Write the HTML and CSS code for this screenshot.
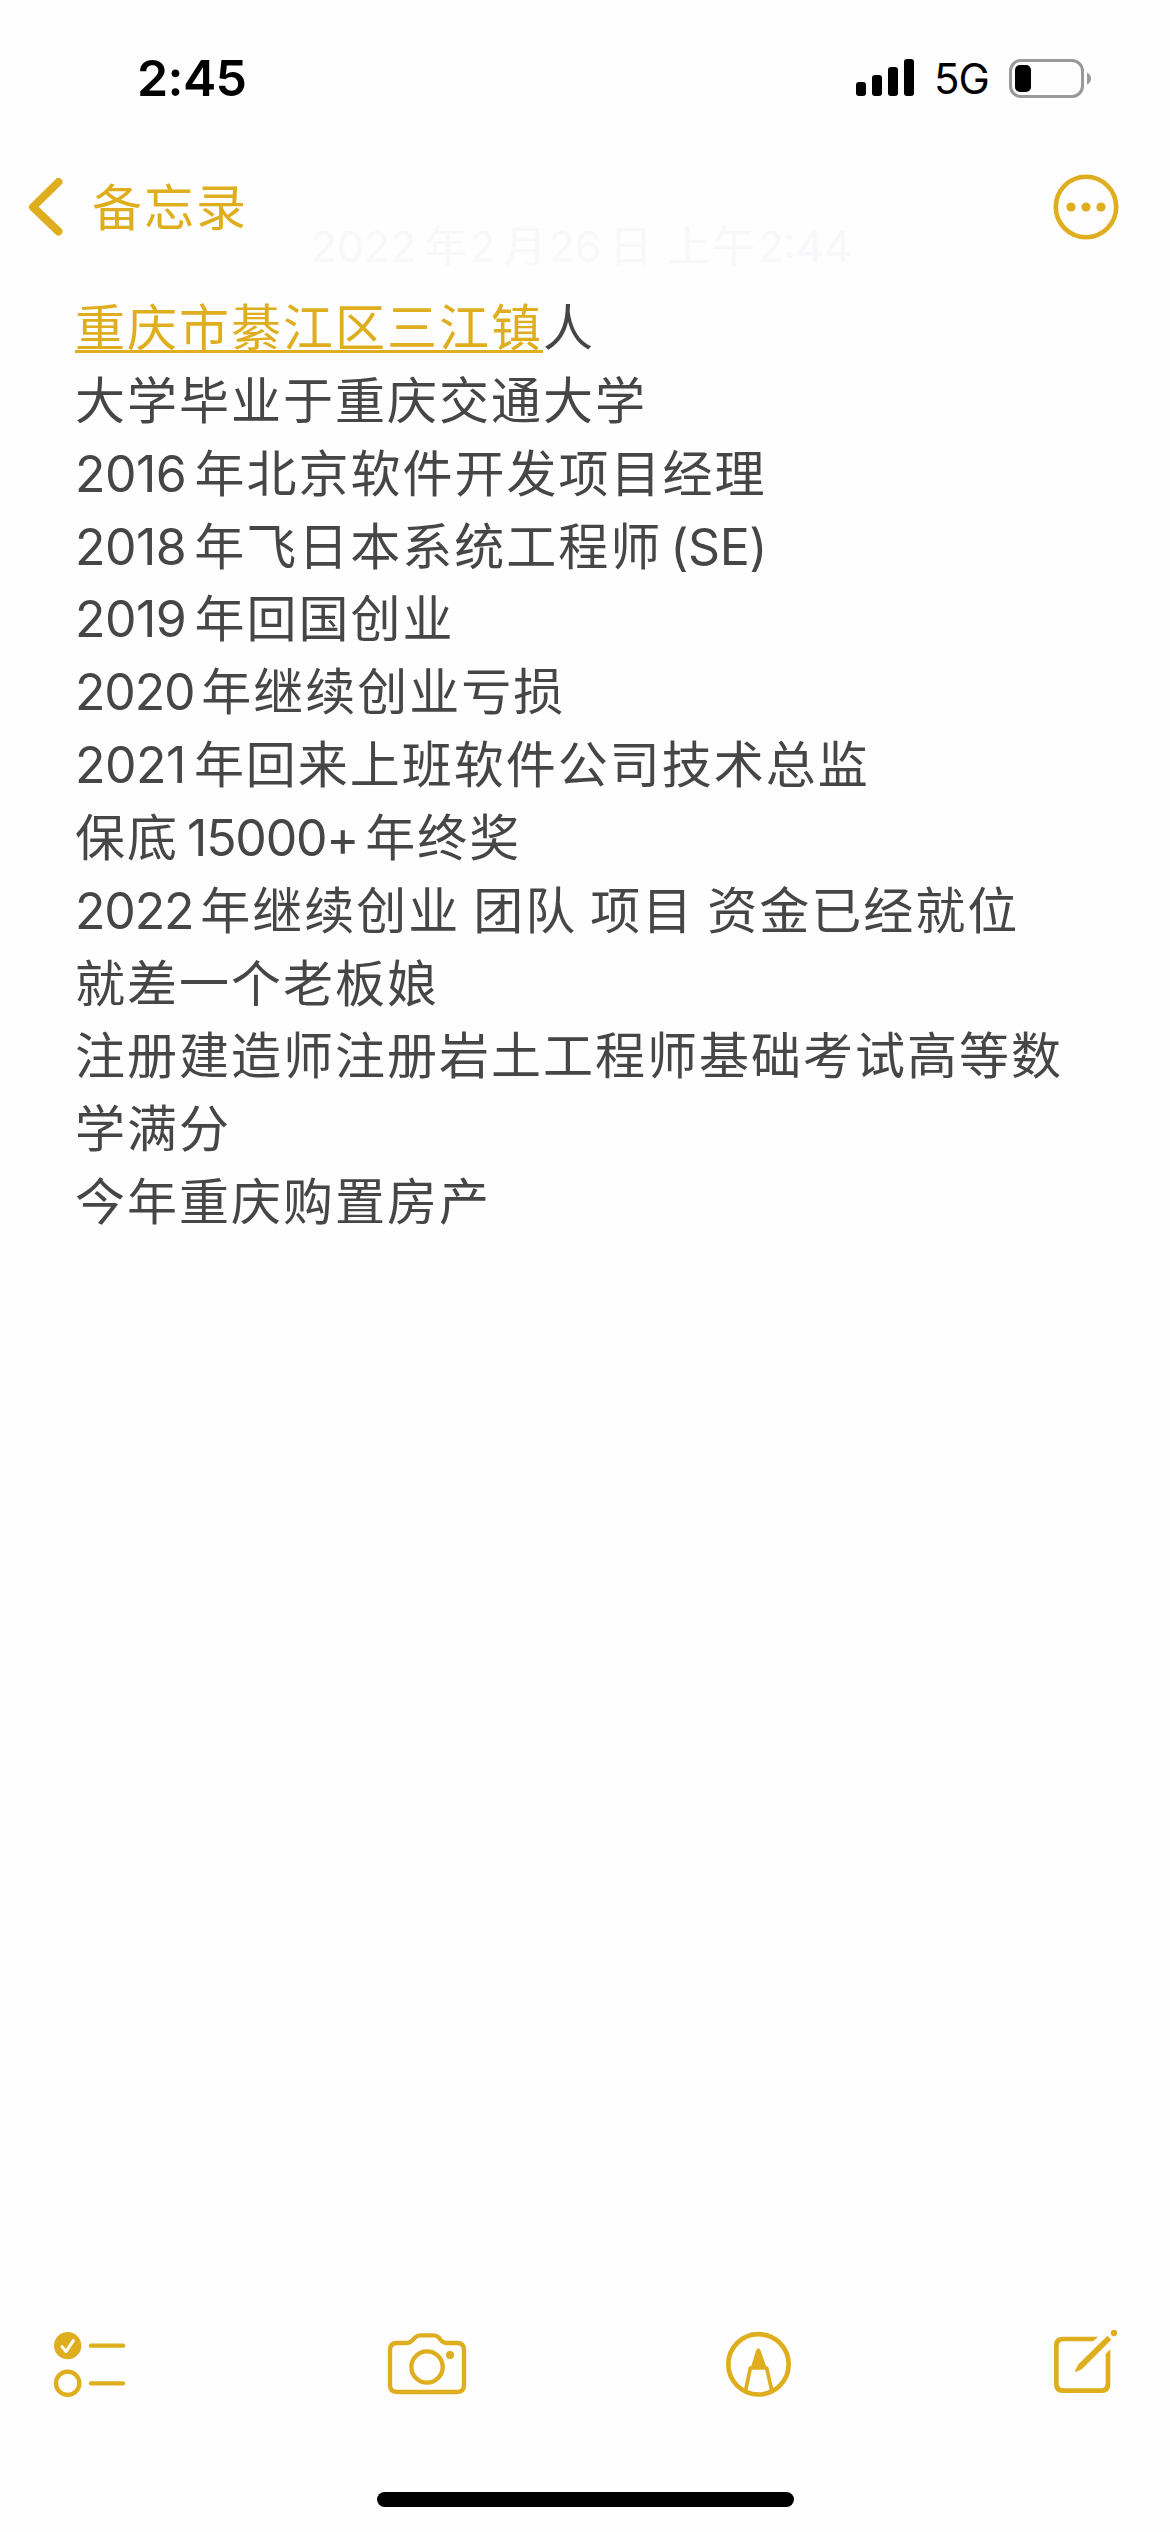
FILE: index.html
```html
<!DOCTYPE html>
<html lang="zh-CN">
  <head>
    <meta charset="UTF-8" />
    <meta name="viewport" content="width=device-width, initial-scale=1.0" />
    <title>备忘录</title>
    <link rel="stylesheet" href="styles.css">
  </head>
  <body>
    <div class="screen">
      <header class="status-bar">
        <span class="clock">2:45</span>
        <div class="status-right">
          <svg class="signal" width="58" height="38" viewBox="0 0 58 38" fill="#000">
            <rect x="0" y="23" width="10" height="14" rx="3"></rect>
            <rect x="16" y="16" width="10" height="21" rx="3"></rect>
            <rect x="32" y="8" width="10" height="29" rx="3"></rect>
            <rect x="48" y="0" width="10" height="37" rx="3"></rect>
          </svg>
          <span class="network">5G</span>
          <svg width="83" height="39" viewBox="0 0 83 39">
            <rect x="1.5" y="1.5" width="72" height="36" rx="10.5" fill="none" stroke="#999" stroke-width="3"></rect>
            <rect x="6" y="6" width="16" height="27" rx="5" fill="#000"></rect>
            <path d="M78 13.500q4 2 4 6t-4 6z" fill="#999"></path>
          </svg>
        </div>
      </header>

      <nav class="nav-bar">
        <a class="back">
          <svg width="36" height="60" viewBox="0 0 36 60" fill="none" stroke="currentColor" stroke-width="8" stroke-linecap="round" stroke-linejoin="round">
            <polyline points="30.500 5 5 30 30.500 54.500"></polyline>
          </svg>
          <span>备忘录</span>
        </a>
        <svg class="more" width="66" height="66" viewBox="0 0 66 66" fill="currentColor">
          <circle cx="33" cy="33" r="30.200" fill="none" stroke="currentColor" stroke-width="4.600"></circle>
          <circle cx="18" cy="33" r="4.600"></circle>
          <circle cx="33" cy="33" r="4.600"></circle>
          <circle cx="48" cy="33" r="4.600"></circle>
        </svg>
      </nav>

      <div class="date"><span class="num">2022</span>年<span class="num">2</span>月<span class="num">26</span>日<span class="gap"></span>上午<span class="num">2:44</span></div>

      <main class="note">
        <p><a class="link">重庆市綦江区三江镇</a>人</p>
        <p>大学毕业于重庆交通大学</p>
        <p><span class="num">2016</span>年北京软件开发项目经理</p>
        <p><span class="num">2018</span>年飞日本系统工程师<span class="num lead">(SE)</span></p>
        <p><span class="num">2019</span>年回国创业</p>
        <p><span class="num tight">2020</span>年继续创业亏损</p>
        <p><span class="num">2021</span>年回来上班软件公司技术总监</p>
        <p>保底<span class="num tight lead">15000+</span>年终奖</p>
        <p><span class="num tight">2022</span>年继续创业<span class="gap"></span>团队<span class="gap"></span>项目<span class="gap"></span>资金已经就位</p>
        <p>就差一个老板娘</p>
        <p>注册建造师注册岩土工程师基础考试高等数</p>
        <p>学满分</p>
        <p>今年重庆购置房产</p>
      </main>

      <footer class="toolbar">
        <svg width="130" height="110" viewBox="0 0 390 330" fill="none" stroke="currentColor" stroke-width="13" stroke-linecap="round" stroke-linejoin="round">
          <circle cx="113" cy="107" r="41" fill="currentColor" stroke="none"></circle>
          <polyline points="96 110 108 125 130 92" stroke="#fff" stroke-width="9"></polyline>
          <circle cx="113" cy="220" r="35"></circle>
          <line x1="183" y1="107" x2="279" y2="107"></line>
          <line x1="183" y1="220" x2="279" y2="220"></line>
        </svg>
        <svg width="130" height="110" viewBox="0 0 390 330" fill="none" stroke="currentColor" stroke-width="13" stroke-linejoin="round">
          <path d="M111 99H140Q149 99 155 93L166 82Q172 76 181 76H221Q230 76 236 82L245 93Q251 99 260 99H291Q312 99 312 120V225Q312 246 291 246H111Q90 246 90 225V120Q90 99 111 99Z"></path>
          <circle cx="201" cy="171" r="47"></circle>
          <circle cx="270" cy="135" r="12" fill="currentColor" stroke="none"></circle>
        </svg>
        <svg width="130" height="110" viewBox="0 0 390 330" fill="none" stroke="currentColor" stroke-width="13" stroke-linejoin="round">
          <circle cx="175.500" cy="163" r="90.500" stroke-width="14"></circle>
          <path d="M153 171L168 122Q175 108 182 122L199 171Z" fill="currentColor" stroke="none"></path>
          <path d="M137 240L151 174H200L215 240" stroke-width="11"></path>
        </svg>
        <svg width="130" height="110" viewBox="0 0 390 330" fill="currentColor">
          <path d="M204 80L190 94H101Q86 94 86 109V220Q86 235 101 235H212Q227 235 227 220V132L241 118V223Q241 249 215 249H98Q72 249 72 223V106Q72 80 98 80Z"></path>
          <path d="M232 77L244 89L157 176L138 186Q134 186 136 181L144 164Z"></path>
          <circle cx="252" cy="69" r="9.500"></circle>
        </svg>
      </footer>
      <div class="home-indicator"></div>
    </div>
  </body>
</html>
```

FILE: styles.css
```css
:root {
  --accent: #dfae1f;
  --ink: #464646;
}
* {
  box-sizing: border-box;
}
body {
  margin: 0;
  background: #fefefe;
  color: var(--ink);
  font-family: "Noto Sans CJK SC", sans-serif;
}
.screen {
  width: 1170px;
  height: 2532px;
  display: flex;
  flex-direction: column;
  overflow: hidden;
}
.status-bar {
  height: 156px;
  padding: 0 78px 0 137px;
  display: flex;
  align-items: center;
  justify-content: space-between;
  color: #000;
  font-family: Inter, sans-serif;
}
.clock {
  font-size: 50px;
  font-weight: 600;
  letter-spacing: -0.6px;
}
.status-right {
  display: flex;
  align-items: center;
}
.network {
  width: 56px;
  margin: 0 19px 0 20px;
  font-size: 42px;
  letter-spacing: -1px;
}
.nav-bar {
  height: 102px;
  padding: 0 51.5px 0 28px;
  display: flex;
  align-items: center;
  justify-content: space-between;
  color: var(--accent);
}
.back {
  display: flex;
  align-items: center;
  gap: 28px;
  font-size: 50px;
  letter-spacing: 2px;
  line-height: 60px;
}
.back span {
  margin-top: -7px;
}
.back svg,
.more {
  display: block;
}
/* the date scrolls up under the nav bar, so it is almost faded out */
.date {
  height: 34px;
  margin-top: -32px;
  line-height: 34px;
  text-align: center;
  font-size: 43px;
  color: #f8f8fa;
  letter-spacing: 2px;
  white-space: nowrap;
}
.date .num {
  letter-spacing: 0;
}
.note {
  flex: 1;
  margin-top: 28px;
  padding: 0 75px;
  font-size: 50px;
  letter-spacing: 2px;
  white-space: nowrap;
}
.note p {
  height: 72.85px;
  margin: 0;
  line-height: 72.85px;
}
.num {
  font-family: Inter, sans-serif;
  letter-spacing: -0.5px;
  margin-right: 8px;
}
.tight {
  letter-spacing: -1.2px;
  margin-right: 7px;
}
.lead {
  margin-left: 8px;
}
.gap {
  display: inline-block;
  width: 13px;
}
.link {
  color: var(--accent);
  text-decoration: underline;
  text-decoration-thickness: 3px;
  text-underline-offset: 4px;
}
.toolbar {
  height: 182px;
  padding-left: 30px;
  display: grid;
  grid-template-columns: 330px 340px 330px 130px;
  color: var(--accent);
}
.home-indicator {
  width: 417px;
  height: 15px;
  margin: 0 auto 25px;
  border-radius: 8px;
  background: #000;
}
```
